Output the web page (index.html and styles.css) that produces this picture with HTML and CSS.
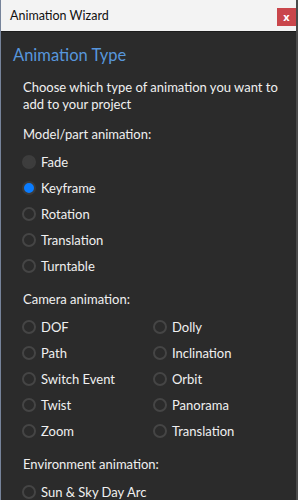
FILE: index.html
```html
<!DOCTYPE html>
<html lang="en">
<head>
  <meta charset="UTF-8">
  <meta name="viewport" content="width=device-width, initial-scale=1.0">
  <title>Animation Wizard</title>
  <link rel="stylesheet" href="styles.css">
</head>
<body>
  <div class="window">
    <!-- Title bar -->
    <div class="titlebar">
      <span class="title">Animation Wizard</span>
      <button class="close-btn">x</button>
    </div>

    <!-- Content -->
    <div class="content">
      <h1>Animation Type</h1>
      <p class="intro">Choose which type of animation you want to add to your project</p>

      <div class="group">
        <div class="group-label">Model/part animation:</div>
        <div class="options">
          <label class="option"><span class="radio disabled"></span>Fade</label>
          <label class="option"><span class="radio checked"></span>Keyframe</label>
          <label class="option"><span class="radio"></span>Rotation</label>
          <label class="option"><span class="radio"></span>Translation</label>
          <label class="option"><span class="radio"></span>Turntable</label>
        </div>
      </div>

      <div class="group">
        <div class="group-label">Camera animation:</div>
        <div class="options two-cols">
          <label class="option"><span class="radio"></span>DOF</label>
          <label class="option"><span class="radio"></span>Dolly</label>
          <label class="option"><span class="radio"></span>Path</label>
          <label class="option"><span class="radio"></span>Inclination</label>
          <label class="option"><span class="radio"></span>Switch Event</label>
          <label class="option"><span class="radio"></span>Orbit</label>
          <label class="option"><span class="radio"></span>Twist</label>
          <label class="option"><span class="radio"></span>Panorama</label>
          <label class="option"><span class="radio"></span>Zoom</label>
          <label class="option"><span class="radio"></span>Translation</label>
        </div>
      </div>

      <div class="group">
        <div class="group-label">Environment animation:</div>
        <div class="options">
          <label class="option"><span class="radio"></span>Sun &amp; Sky Day Arc</label>
        </div>
      </div>
    </div>
  </div>
</body>
</html>
```

FILE: styles.css
```css
body {
  margin: 0;
  font-family: 'Lato', 'Noto Sans', sans-serif;
  background-color: #2b2b2b;
  overflow: hidden;
}

.window {
  width: 298px;
  height: 500px;
  box-sizing: border-box;
  border-left: 1px solid #76839a;
  border-right: 2px solid #4a4a4a;
  background-color: #2b2b2b;
  color: #f0f0f0;
}

.titlebar {
  height: 31px;
  background-color: #f3f3f3;
  border-bottom: 1px solid #1c1c1c;
  display: flex;
  align-items: center;
  justify-content: space-between;
  padding-left: 9px;
  padding-right: 0;
}

.title {
  font-size: 12.5px;
  color: #111;
}

.close-btn {
  width: 19px;
  height: 18px;
  margin-top: 2px;
  padding: 0;
  border: none;
  background-color: #c9464b;
  color: white;
  font-family: 'Noto Sans', sans-serif;
  font-size: 11px;
  font-weight: bold;
  line-height: 16px;
}

.content {
  padding-left: 12px;
}

.content h1 {
  margin: 12px 0 0 0;
  font-size: 16.5px;
  line-height: 22px;
  font-weight: normal;
  color: #5796dc;
}

.intro {
  margin: 13px 0 13px 10px;
  font-size: 13px;
  line-height: 17px;
}

.group {
  margin-left: 10px;
}

.group + .group {
  margin-top: 12px;
}

.group-label {
  font-size: 13px;
  line-height: 17px;
}

.options {
  margin-top: 6px;
  margin-left: -1px;
}

.two-cols {
  display: grid;
  grid-template-columns: 131px 1fr;
}

.option {
  display: flex;
  align-items: center;
  height: 26px;
  font-size: 13px;
}

.radio {
  width: 14px;
  height: 14px;
  box-sizing: border-box;
  border-radius: 50%;
  border: 2px solid #454545;
  margin-right: 5px;
}

.radio.disabled {
  background-color: #3d3d3d;
  border-color: #3d3d3d;
}

.radio.checked {
  background-color: #0a7cff;
  border-color: #3a3a3a;
}
```
